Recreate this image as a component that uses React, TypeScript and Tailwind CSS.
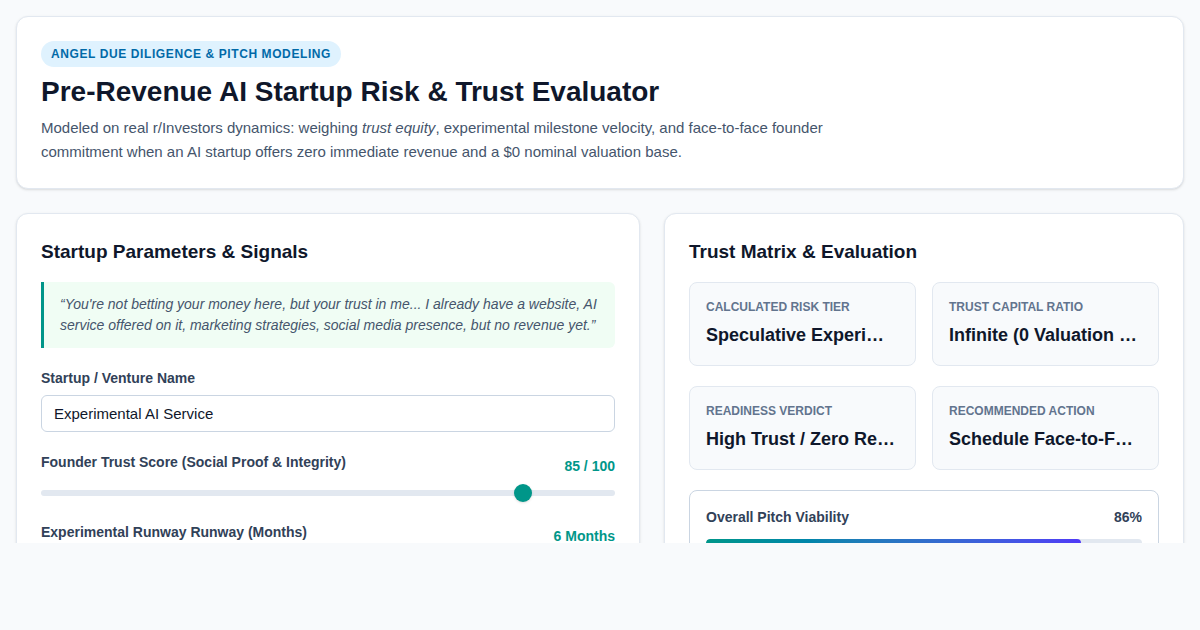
import React, { useState } from 'react';

const metrics = [
  { label: 'Calculated Risk Tier', value: 'Speculative Experimental' },
  { label: 'Trust Capital Ratio', value: 'Infinite (0 Valuation Base)' },
  { label: 'Readiness Verdict', value: 'High Trust / Zero Revenue' },
  { label: 'Recommended Action', value: 'Schedule Face-to-Face Meeting' },
];

const Slider: React.FC<{ value: number; max: number }> = ({ value, max }) => {
  const pct = value / max;
  return (
    <div className="relative mt-2 h-[18px]">
      <div className="absolute left-0 right-0 top-[6px] h-1.5 rounded-full bg-slate-200" />
      <div
        className="absolute top-0 h-[18px] w-[18px] rounded-full bg-teal-600 shadow-sm"
        style={{ left: `calc(${pct} * (100% - 18px))` }}
      />
    </div>
  );
};

export default function App() {
  const [name, setName] = useState('Experimental AI Service');
  const viability = 86;

  return (
    <div className="min-h-screen bg-slate-50 font-['Liberation_Sans',Arial,sans-serif] text-slate-900">
      <div className="h-[543px] overflow-hidden px-4 pt-4">
        <header className="rounded-xl border border-slate-200 bg-white p-6 shadow-sm">
          <span className="inline-block rounded-full bg-sky-100 px-2.5 py-[5px] text-xs font-bold uppercase leading-4 tracking-wider text-sky-700">
            Angel Due Diligence &amp; Pitch Modeling
          </span>
          <h1 className="mt-[7px] text-[28px] font-bold leading-9 text-slate-900">
            Pre-Revenue AI Startup Risk &amp; Trust Evaluator
          </h1>
          <p className="mt-1.5 max-w-[820px] text-[15px] leading-6 text-slate-600">
            Modeled on real r/Investors dynamics: weighing <em>trust equity</em>, experimental milestone velocity, and
            face-to-face founder commitment when an AI startup offers zero immediate revenue and a $0 nominal valuation
            base.
          </p>
        </header>

        <div className="mt-6 grid grid-cols-[1.2fr_1fr] gap-6">
          <section className="rounded-xl border border-slate-200 bg-white p-6 shadow-sm">
            <h2 className="text-[19px] font-bold leading-7 text-slate-900">Startup Parameters &amp; Signals</h2>
            <blockquote className="mt-4 rounded-r-md border-l-[3px] border-teal-600 bg-green-50 px-4 py-3 text-sm italic leading-[21px] text-slate-600">
              “You're not betting your money here, but your trust in me... I already have a website, AI service offered
              on it, marketing strategies, social media presence, but no revenue yet.”
            </blockquote>

            <div className="mt-5">
              <label className="block text-sm font-semibold leading-5 text-slate-700">Startup / Venture Name</label>
              <input
                value={name}
                onChange={(e) => setName(e.target.value)}
                className="mt-[7px] h-[37px] w-full rounded-md border border-slate-300 bg-white px-3 text-[15px] text-slate-900 outline-none"
              />
            </div>

            <div className="mt-5">
              <div className="flex justify-between">
                <label className="text-sm font-semibold leading-5 text-slate-700">
                  Founder Trust Score (Social Proof &amp; Integrity)
                </label>
                <span className="mt-1 text-sm font-bold leading-5 text-teal-600">85 / 100</span>
              </div>
              <Slider value={85} max={100} />
            </div>

            <div className="mt-5">
              <div className="flex justify-between">
                <label className="text-sm font-semibold leading-5 text-slate-700">
                  Experimental Runway Runway (Months)
                </label>
                <span className="mt-1 text-sm font-bold leading-5 text-teal-600">6 Months</span>
              </div>
              <Slider value={6} max={24} />
            </div>
          </section>

          <section className="rounded-xl border border-slate-200 bg-white p-6 shadow-sm">
            <h2 className="text-[19px] font-bold leading-7 text-slate-900">Trust Matrix &amp; Evaluation</h2>
            <div className="mt-4 grid grid-cols-2 gap-x-4 gap-y-5">
              {metrics.map((m) => (
                <div key={m.label} className="min-w-0 rounded-lg border border-slate-200 bg-slate-50 p-4">
                  <div className="text-xs font-semibold uppercase leading-4 text-slate-500">{m.label}</div>
                  <div className="mt-1.5 truncate text-lg font-bold leading-7 text-slate-900">{m.value}</div>
                </div>
              ))}
            </div>

            <div className="mt-5 rounded-lg border border-slate-300 bg-white p-4">
              <div className="flex justify-between text-sm font-semibold leading-5 text-slate-700">
                <span>Overall Pitch Viability</span>
                <span className="font-bold">{viability}%</span>
              </div>
              <div className="mt-3 h-2 w-full overflow-hidden rounded-full bg-slate-200">
                <div
                  className="h-full rounded-full bg-gradient-to-r from-teal-600 to-indigo-600"
                  style={{ width: `${viability}%` }}
                />
              </div>
            </div>
          </section>
        </div>
      </div>
    </div>
  );
}
